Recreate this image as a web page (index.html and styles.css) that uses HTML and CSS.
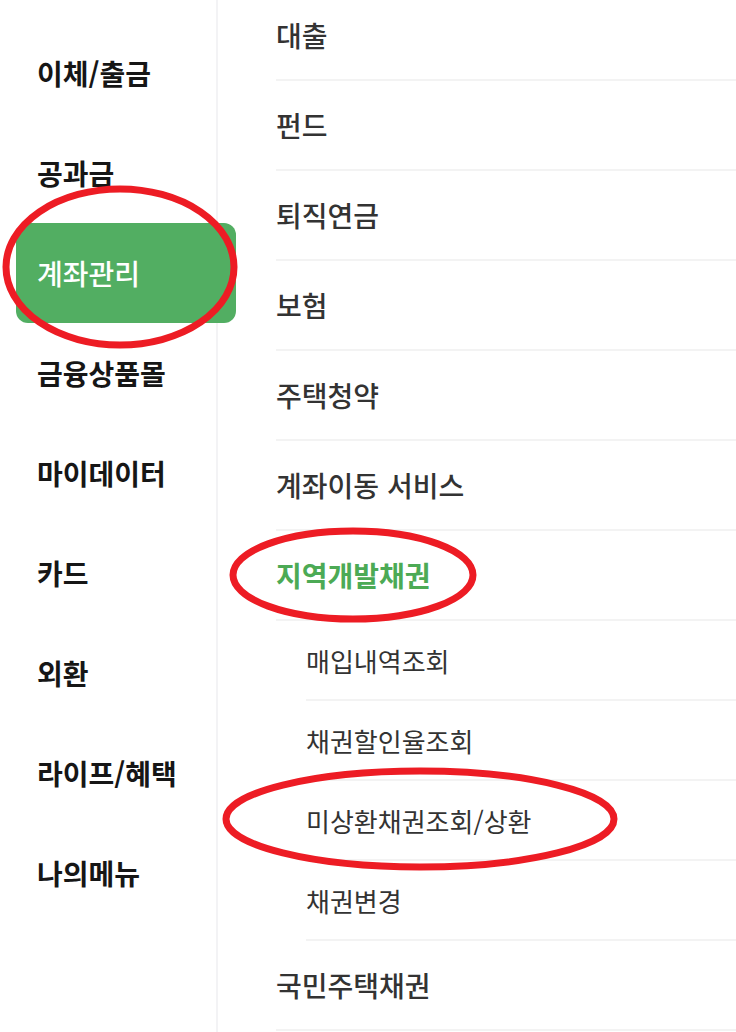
FILE: index.html
```html
<!DOCTYPE html>
<html lang="ko">
<head>
<meta charset="utf-8">
<title>메뉴</title>
<link rel="stylesheet" href="styles.css">
</head>
<body>
<div class="page">
  <nav class="side">
    <div class="side-item">이체/출금</div>
    <div class="side-item">공과금</div>
    <div class="side-item active">계좌관리</div>
    <div class="side-item">금융상품몰</div>
    <div class="side-item">마이데이터</div>
    <div class="side-item">카드</div>
    <div class="side-item">외환</div>
    <div class="side-item">라이프/혜택</div>
    <div class="side-item">나의메뉴</div>
  </nav>
  <main class="content">
    <ul class="menu">
      <li class="menu-item">대출</li>
      <li class="menu-item">펀드</li>
      <li class="menu-item">퇴직연금</li>
      <li class="menu-item">보험</li>
      <li class="menu-item">주택청약</li>
      <li class="menu-item">계좌이동 서비스</li>
      <li class="menu-item open">지역개발채권</li>
      <li class="sub-item">매입내역조회</li>
      <li class="sub-item">채권할인율조회</li>
      <li class="sub-item">미상환채권조회/상환</li>
      <li class="sub-item">채권변경</li>
      <li class="menu-item">국민주택채권</li>
    </ul>
  </main>
  <svg class="marks" width="736" height="1032" viewBox="0 0 736 1032" aria-hidden="true">
    <ellipse cx="120" cy="267" rx="114" ry="78" fill="none" stroke="#ed1c24" stroke-width="7"/>
    <ellipse cx="353" cy="575" rx="120" ry="44" fill="none" stroke="#ed1c24" stroke-width="7"/>
    <ellipse cx="420" cy="819" rx="194" ry="48" fill="none" stroke="#ed1c24" stroke-width="7"/>
  </svg>
</div>
</body>
</html>
```
FILE: styles.css
```css
* { box-sizing: border-box; }
html, body {
  margin: 0;
  padding: 0;
  background: #fff;
}
body {
  font-family: "Noto Sans CJK KR", "Noto Sans", sans-serif;
  width: 736px;
  height: 1032px;
  overflow: hidden;
}
.page {
  position: relative;
  display: flex;
  width: 736px;
  height: 1032px;
  overflow: hidden;
}
.side {
  width: 218px;
  flex: 0 0 218px;
  border-right: 2px solid #f3f3f5;
  padding: 23px 0 0 16px;
  display: flex;
  flex-direction: column;
  overflow: visible;
}
.side-item {
  position: relative;
  z-index: 1;
  width: 220px;
  height: 100px;
  flex: 0 0 100px;
  display: flex;
  align-items: center;
  padding-left: 21px;
  font-size: 28px;
  font-weight: 700;
  color: #161616;
}
.side-item.active {
  background: #52ae62;
  color: #fff;
  font-weight: 500;
  border-radius: 12px;
}
.content {
  flex: 1;
  padding-left: 58px;
}
.menu {
  list-style: none;
  margin: -9px 0 0 0;
  padding: 0;
}
.menu-item {
  height: 90px;
  display: flex;
  align-items: center;
  border-bottom: 2px solid #f3f3f3;
  font-size: 28px;
  font-weight: 500;
  color: #333;
}
.menu-item.open {
  color: #4caa55;
  font-weight: 700;
}
.sub-item {
  height: 80px;
  margin-left: 30px;
  display: flex;
  align-items: center;
  border-bottom: 2px solid #f3f3f3;
  font-size: 26px;
  font-weight: 400;
  color: #333;
}
.marks {
  position: absolute;
  left: 0;
  top: 0;
  z-index: 5;
  pointer-events: none;
}
```
